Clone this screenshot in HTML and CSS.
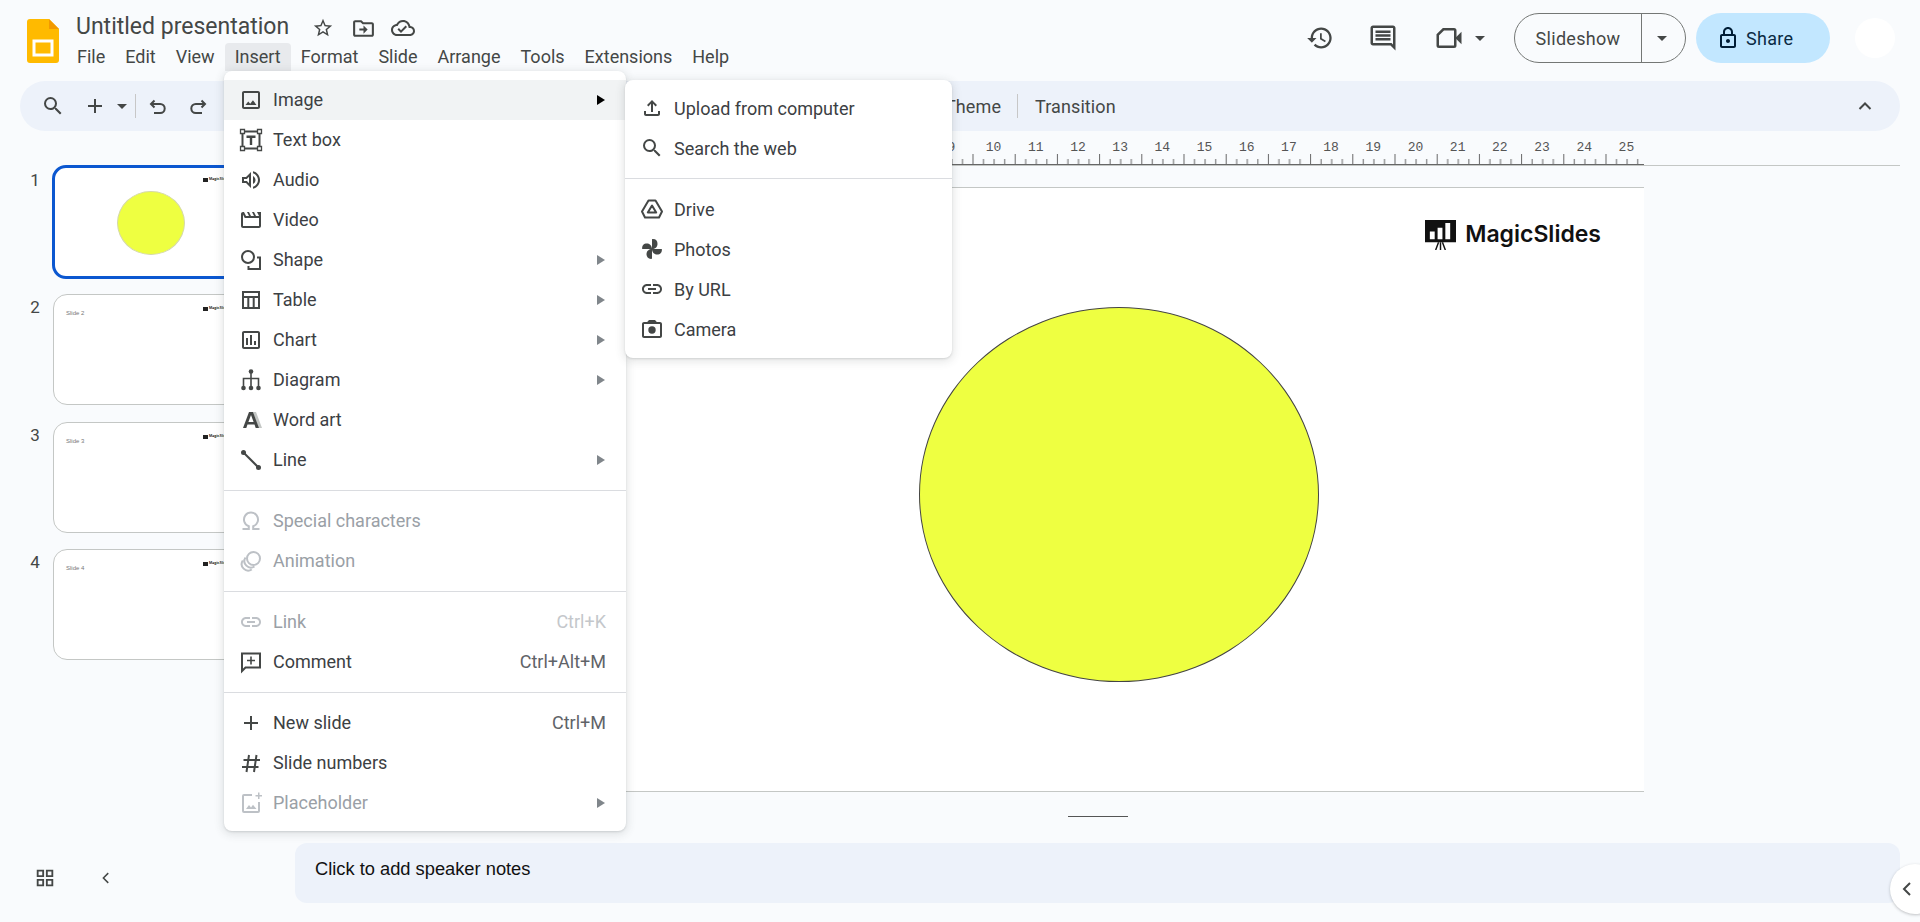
FILE: index.html
```html
<!DOCTYPE html>
<html lang="en">
<head>
<meta charset="utf-8">
<title>Untitled presentation</title>
<link rel="stylesheet" href="styles.css">
</head>
<body>
<div class="app">
  <header class="header">
    <svg class="doc-logo" viewBox="0 0 32 44"><path fill="#ffba00" d="M3 0h19l10 10v31a3 3 0 0 1-3 3H3a3 3 0 0 1-3-3V3a3 3 0 0 1 3-3z"/><path fill="#f29900" d="M22 0l10 10H22z"/><path fill="none" stroke="#fff" stroke-width="3" d="M7 22h18v14H7z"/></svg>
    <div class="doc-col">
      <div class="title-row">
        <span class="doc-title">Untitled presentation</span>
        <svg class="ic-star" viewBox="0 0 24 24"><path d="M22 9.24l-7.19-.62L12 2 9.19 8.63 2 9.24l5.46 4.73L5.82 21 12 17.27 18.18 21l-1.63-7.03L22 9.24zM12 15.4l-3.76 2.27 1-4.28-3.32-2.88 4.38-.38L12 6.1l1.71 4.04 4.38.38-3.32 2.88 1 4.28L12 15.4z"/></svg>
        <svg class="ic-folder" viewBox="0 0 24 24"><path d="M20 6h-8l-2-2H4c-1.1 0-2 .9-2 2v12c0 1.1.9 2 2 2h16c1.1 0 2-.9 2-2V8c0-1.1-.9-2-2-2zm0 12H4V6h5.17l2 2H20v10zm-8-4H8v-2h4V9l4 4-4 4v-3z"/></svg>
        <svg class="ic-cloud" viewBox="0 0 24 24"><path d="M19.35 10.04C18.67 6.59 15.64 4 12 4 9.11 4 6.6 5.64 5.35 8.04 2.34 8.36 0 10.91 0 14c0 3.31 2.69 6 6 6h13c2.76 0 5-2.24 5-5 0-2.64-2.05-4.78-4.65-4.96zM19 18H6c-2.21 0-4-1.79-4-4 0-2.05 1.53-3.76 3.56-3.97l1.07-.11.5-.95C8.08 7.14 9.94 6 12 6c2.62 0 4.88 1.86 5.39 4.43l.3 1.5 1.53.11c1.56.1 2.78 1.41 2.78 2.96 0 1.65-1.35 3-3 3zm-9-3.82l-2.09-2.09L6.5 13.5 10 17l6.01-6.01-1.41-1.41z"/></svg>
      </div>
      <nav class="menubar">
        <span class="mb-item">File</span><span class="mb-item">Edit</span><span class="mb-item">View</span><span class="mb-item mb-open">Insert</span><span class="mb-item">Format</span><span class="mb-item">Slide</span><span class="mb-item">Arrange</span><span class="mb-item">Tools</span><span class="mb-item">Extensions</span><span class="mb-item">Help</span>
      </nav>
    </div>
    <div class="actions">
      <svg class="ic-action ic-history" viewBox="0 0 24 24"><path d="M13 3c-4.97 0-9 4.03-9 9H1l3.89 3.89.07.14L9 12H6c0-3.87 3.13-7 7-7s7 3.13 7 7-3.13 7-7 7c-1.93 0-3.68-.79-4.94-2.06l-1.42 1.42C8.27 19.99 10.51 21 13 21c4.97 0 9-4.03 9-9s-4.03-9-9-9zm-1 5v5l4.28 2.54.72-1.21-3.5-2.08V8H12z"/></svg>
      <svg class="ic-action ic-comment" viewBox="0 0 24 24"><path d="M20 2H4c-1.1 0-2 .9-2 2v12c0 1.1.9 2 2 2h14l4 4V4c0-1.1-.9-2-2-2zm0 15.17L18.83 16H4V4h16v13.17zM6 12h12v2H6zm0-3h12v2H6zm0-3h12v2H6z"/></svg>
      <svg class="ic-action ic-meet" viewBox="0 0 24 24"><path fill="none" stroke="#444746" stroke-width="2" d="M7.5 5H16a1 1 0 0 1 1 1v12a1 1 0 0 1-1 1H4a1 1 0 0 1-1-1V9.5z"/><path d="M17 12l5-5v10z"/></svg>
      <span class="caret caret-meet"></span>
      <div class="slideshow"><span class="ss-main">Slideshow</span><span class="ss-drop"><span class="caret"></span></span></div>
      <div class="share">
        <svg class="ic-lock" viewBox="0 0 24 24"><path d="M18 8h-1V6c0-2.76-2.24-5-5-5S7 3.24 7 6v2H6c-1.1 0-2 .9-2 2v10c0 1.1.9 2 2 2h12c1.1 0 2-.9 2-2V10c0-1.1-.9-2-2-2zM9 6c0-1.66 1.34-3 3-3s3 1.34 3 3v2H9V6zm9 14H6V10h12v10zm-6-3c1.1 0 2-.9 2-2s-.9-2-2-2-2 .9-2 2 .9 2 2 2z"/></svg>
        <span>Share</span>
      </div>
      <div class="avatar"></div>
    </div>
  </header>

  <div class="toolbar">
    <svg class="tb-icon" viewBox="0 0 24 24"><path d="M15.5 14h-.79l-.28-.27A6.471 6.471 0 0 0 16 9.5 6.5 6.5 0 1 0 9.5 16c1.61 0 3.09-.59 4.23-1.57l.27.28v.79l5 4.99L20.49 19l-4.99-5zm-6 0C7.01 14 5 11.99 5 9.5S7.01 5 9.5 5 14 7.01 14 9.5 11.99 14 9.5 14z"/></svg>
    <svg class="tb-icon tb-plus" viewBox="0 0 24 24"><path d="M19 13h-6v6h-2v-6H5v-2h6V5h2v6h6v2z"/></svg>
    <span class="caret tb-caret"></span>
    <span class="tb-sep tb-sep-a"></span>
    <svg class="tb-icon tb-undo" viewBox="0 0 24 24"><path class="stroke-ic" d="M8.5 6.5L5 10l3.5 3.5M5 10h9.2a4.5 4.5 0 0 1 0 9H8"/></svg>
    <svg class="tb-icon tb-redo" viewBox="0 0 24 24"><path class="stroke-ic" d="M15.5 6.5L19 10l-3.5 3.5M19 10H9.800a4.500 4.500 0 0 0 0 9H16"/></svg>
    <span class="tb-text tb-theme">Theme</span>
    <span class="tb-sep tb-sep-b"></span>
    <span class="tb-text">Transition</span>
    <svg class="tb-icon tb-collapse" viewBox="0 0 24 24"><path class="stroke-ic" d="M6.500 15L12 9.500 17.500 15"/></svg>
  </div>

  <div class="workspace">
    <aside class="filmstrip">
      <div class="film-row">
        <span class="film-num">1</span>
        <div class="thumb thumb-active">
          <div class="mini-logo"><i class="mini-mark"></i>MagicSlides</div>
          <div class="mini-circle"></div>
        </div>
      </div>
      <div class="film-row">
        <span class="film-num">2</span>
        <div class="thumb"><div class="mini-logo"><i class="mini-mark"></i>MagicSlides</div><span class="mini-title">Slide 2</span></div>
      </div>
      <div class="film-row film-row-short">
        <span class="film-num">3</span>
        <div class="thumb"><div class="mini-logo"><i class="mini-mark"></i>MagicSlides</div><span class="mini-title">Slide 3</span></div>
      </div>
      <div class="film-row">
        <span class="film-num">4</span>
        <div class="thumb"><div class="mini-logo"><i class="mini-mark"></i>MagicSlides</div><span class="mini-title">Slide 4</span></div>
      </div>
      <div class="film-foot">
        <svg class="foot-grid" viewBox="0 0 24 24"><path class="stroke-ic" d="M4 4h6v6H4zM14 4h6v6h-6zM4 14h6v6H4zM14 14h6v6h-6z"/></svg>
        <svg class="foot-chev" viewBox="0 0 24 24"><path class="stroke-ic" d="M15 5.500L8.500 12l6.500 6.500"/></svg>
      </div>
    </aside>

    <main class="editor">
      <div class="ruler">
        <div class="ruler-labels">
          <span>9</span><span>10</span><span>11</span><span>12</span><span>13</span><span>14</span><span>15</span><span>16</span><span>17</span><span>18</span><span>19</span><span>20</span><span>21</span><span>22</span><span>23</span><span>24</span><span>25</span>
        </div>
        <svg class="ruler-ticks" width="1349" height="10">
          <defs>
            <pattern id="ticks" x="2.300" y="0" width="42.200" height="10" patternUnits="userSpaceOnUse">
              <path d="M.5 0v10M11 5v5M21.600 5v5M32.200 5v5" stroke="#666" stroke-width="1" fill="none"/>
            </pattern>
          </defs>
          <rect width="1349" height="10" fill="url(#ticks)"/>
        </svg>
      </div>
      <div class="slide">
        <div class="slide-logo">
          <svg class="slide-mark" viewBox="0 0 32 31"><path fill="#111" d="M0 0h32v23H0z"/><path fill="#fff" d="M5 12h5v8H5zM13 8h5v12h-5zM21 3h5v17h-5z"/><path stroke="#111" stroke-width="1.500" fill="none" d="M14 23l-3 8M16 23v8M18 23l3 8"/></svg>
          <span>MagicSlides</span>
        </div>
        <div class="slide-circle"></div>
      </div>
      <div class="handle"></div>
      <div class="notes">Click to add speaker notes</div>
    </main>
  </div>

  <div class="side-toggle"><svg viewBox="0 0 24 24"><path class="stroke-ic" d="M15 6l-6 6 6 6"/></svg></div>

  <div class="menu menu-insert">
    <div class="mi mi-hover"><svg class="mi-ic" viewBox="0 0 24 24"><path d="M19 3H5c-1.100 0-2 .9-2 2v14c0 1.100.9 2 2 2h14c1.100 0 2-.9 2-2V5c0-1.100-.9-2-2-2zm0 16H5V5h14v14zm-5.040-6.710l-2.750 3.540-1.960-2.360L6.500 17h11l-3.540-4.710z"/></svg><span>Image</span><i class="arrow arrow-dark"></i></div>
    <div class="mi"><svg class="mi-ic" viewBox="0 0 24 24"><path class="stroke-ic" d="M4 3.500h16M4 20.500h16M3.500 4v16M20.500 4v16"/><path d="M1.500 1.500h4v4h-4zM18.500 1.500h4v4h-4zM1.500 18.500h4v4h-4zM18.500 18.500h4v4h-4z" fill="#fff" stroke="#444746" stroke-width="1.300"/><path d="M7.500 7.500h9v2.400h-3.300V17h-2.400V9.900H7.500z"/></svg><span>Text box</span></div>
    <div class="mi"><svg class="mi-ic" viewBox="0 0 24 24"><path d="M3 9v6h4l5 5V4L7 9H3zm7-.17v6.340L7.830 13H5v-2h2.830L10 8.830zM16.500 12c0-1.770-1.020-3.290-2.500-4.030v8.050c1.480-.73 2.500-2.250 2.500-4.020z"/><path d="M14 3.230v2.060c2.890.86 5 3.540 5 6.710s-2.110 5.850-5 6.710v2.060c4.010-.91 7-4.490 7-8.770 0-4.280-2.990-7.860-7-8.770z"/></svg><span>Audio</span></div>
    <div class="mi"><svg class="mi-ic" viewBox="0 0 24 24"><path d="M4 6.470L5.760 10H20v8H4V6.470M22 4h-4l2 4h-3l-2-4h-2l2 4h-3l-2-4H8l2 4H7L5 4H4c-1.100 0-1.990.9-1.990 2L2 18c0 1.100.9 2 2 2h16c1.100 0 2-.9 2-2V4z"/></svg><span>Video</span></div>
    <div class="mi"><svg class="mi-ic" viewBox="0 0 24 24"><circle class="stroke-ic" cx="9" cy="9" r="6"/><path class="stroke-ic" d="M18 9.500h3v11.500H9.500v-3"/></svg><span>Shape</span><i class="arrow"></i></div>
    <div class="mi"><svg class="mi-ic" viewBox="0 0 24 24"><path class="stroke-ic" d="M4 4h16v16H4zM4 9h16M9.300 9v11M14.700 9v11"/></svg><span>Table</span><i class="arrow"></i></div>
    <div class="mi"><svg class="mi-ic" viewBox="0 0 24 24"><path d="M19 3H5c-1.100 0-2 .9-2 2v14c0 1.100.9 2 2 2h14c1.100 0 2-.9 2-2V5c0-1.100-.9-2-2-2zm0 16H5V5h14v14zM7 10h2v7H7zm4-3h2v10h-2zm4 6h2v4h-2z"/></svg><span>Chart</span><i class="arrow"></i></div>
    <div class="mi"><svg class="mi-ic" viewBox="0 0 24 24"><circle cx="12" cy="3.500" r="2.300"/><circle cx="4.500" cy="20" r="2.300"/><circle cx="12" cy="20" r="2.300"/><circle cx="19.500" cy="20" r="2.300"/><path fill="none" stroke="#444746" stroke-width="1.600" d="M12 5v13M4.500 18v-7.500h15V18"/></svg><span>Diagram</span><i class="arrow"></i></div>
    <div class="mi"><svg class="mi-ic" viewBox="0 0 24 24"><path fill="#c4c7c5" d="M14 4h3l6 16h-3.500z"/><path d="M10 4h4l6 16h-3.300l-1.200-3.500H8.500L7.300 20H4zm-.6 10h5.200L12 7z"/></svg><span>Word art</span></div>
    <div class="mi"><svg class="mi-ic" viewBox="0 0 24 24"><circle cx="4.500" cy="4.500" r="2.500"/><circle cx="19.500" cy="19.500" r="2.500"/><path fill="none" stroke="#444746" stroke-width="2" d="M4.500 4.500l15 15"/></svg><span>Line</span><i class="arrow"></i></div>
    <div class="mi-sep"></div>
    <div class="mi mi-off"><svg class="mi-ic" viewBox="0 0 24 24"><path fill="none" stroke="#bdc1c6" stroke-width="2" d="M3.500 20h6.300v-2.800a7 7 0 1 1 4.400 0V20h6.300"/></svg><span>Special characters</span></div>
    <div class="mi mi-off"><svg class="mi-ic" viewBox="0 0 24 24"><g fill="none" stroke="#bdc1c6" stroke-width="2"><circle cx="14.500" cy="9.500" r="6.500"/><path d="M6.500 8.500a6.500 6.500 0 0 0 9 9"/><path d="M3.800 11.500a6.500 6.500 0 0 0 9 9"/></g></svg><span>Animation</span></div>
    <div class="mi-sep"></div>
    <div class="mi mi-off mi-faint"><svg class="mi-ic" viewBox="0 0 24 24"><path d="M3.900 12c0-1.710 1.390-3.100 3.100-3.100h4V7H7c-2.760 0-5 2.240-5 5s2.240 5 5 5h4v-1.900H7c-1.710 0-3.100-1.390-3.100-3.100zM8 13h8v-2H8v2zm9-6h-4v1.900h4c1.710 0 3.100 1.390 3.100 3.100s-1.390 3.100-3.100 3.100h-4V17h4c2.760 0 5-2.240 5-5s-2.240-5-5-5z"/></svg><span>Link</span><em class="kbd">Ctrl+K</em></div>
    <div class="mi"><svg class="mi-ic" viewBox="0 0 24 24"><path class="stroke-ic" d="M3 21V3.500h18v14H6.500z"/><path class="stroke-thin" d="M12 6.500v8M8 10.500h8"/></svg><span>Comment</span><em class="kbd">Ctrl+Alt+M</em></div>
    <div class="mi-sep"></div>
    <div class="mi"><svg class="mi-ic" viewBox="0 0 24 24"><path d="M19 13h-6v6h-2v-6H5v-2h6V5h2v6h6v2z"/></svg><span>New slide</span><em class="kbd">Ctrl+M</em></div>
    <div class="mi"><svg class="mi-ic" viewBox="0 0 24 24"><path class="stroke-ic" d="M10 4L7.500 21M17.500 4L15 21M4.500 9H21M3 16h16.500"/></svg><span>Slide numbers</span></div>
    <div class="mi mi-off"><svg class="mi-ic" viewBox="0 0 24 24"><path fill="none" stroke="#bdc1c6" stroke-width="2" d="M13 4H5a1 1 0 0 0-1 1v15a1 1 0 0 0 1 1h14a1 1 0 0 0 1-1v-9"/><path fill="#bdc1c6" d="M7 18l3-4 2 2.500 2-2.700 3.500 4.200zM19 1.500h1.500V4H23v1.500h-2.500V8H19V5.500h-2.500V4H19z"/></svg><span>Placeholder</span><i class="arrow"></i></div>
  </div>

  <div class="menu menu-image">
    <div class="mi"><svg class="mi-ic" viewBox="0 0 24 24"><path d="M18 15v3H6v-3H4v3c0 1.100.9 2 2 2h12c1.100 0 2-.9 2-2v-3h-2zM7 9l1.410 1.410L11 7.830V16h2V7.830l2.590 2.580L17 9l-5-5-5 5z"/></svg><span>Upload from computer</span></div>
    <div class="mi"><svg class="mi-ic" viewBox="0 0 24 24"><path d="M15.500 14h-.79l-.28-.27A6.471 6.471 0 0 0 16 9.500 6.500 6.500 0 1 0 9.500 16c1.610 0 3.090-.59 4.230-1.570l.27.28v.79l5 4.990L20.490 19l-4.990-5zm-6 0C7.010 14 5 11.990 5 9.500S7.010 5 9.500 5 14 7.010 14 9.500 11.990 14 9.500 14z"/></svg><span>Search the web</span></div>
    <div class="mi-sep"></div>
    <div class="mi"><svg class="mi-ic" viewBox="0 0 24 24"><path fill="none" stroke="#444746" stroke-width="2" stroke-linejoin="round" d="M8.500 3.500h7L22 14.500l-3 6H5l-3-6z"/><path fill="none" stroke="#444746" stroke-width="2" stroke-linejoin="round" d="M12 8.500L7.800 15.500h8.400z"/></svg><span>Drive</span></div>
    <div class="mi"><svg class="mi-ic" viewBox="0 0 24 24"><path d="M12 12V2.200c3.500-.5 5.500 1.500 5.500 4.800 0 3-2.500 5-5.500 5z"/><path d="M12 12V2.200c3.500-.5 5.500 1.500 5.500 4.800 0 3-2.500 5-5.500 5z" transform="rotate(90 12 12)"/><path d="M12 12V2.200c3.500-.5 5.500 1.500 5.500 4.800 0 3-2.500 5-5.500 5z" transform="rotate(180 12 12)"/><path d="M12 12V2.200c3.500-.5 5.500 1.500 5.500 4.800 0 3-2.500 5-5.500 5z" transform="rotate(270 12 12)"/></svg><span>Photos</span></div>
    <div class="mi"><svg class="mi-ic" viewBox="0 0 24 24"><path d="M3.900 12c0-1.710 1.390-3.100 3.100-3.100h4V7H7c-2.760 0-5 2.240-5 5s2.240 5 5 5h4v-1.900H7c-1.710 0-3.100-1.390-3.100-3.100zM8 13h8v-2H8v2zm9-6h-4v1.900h4c1.710 0 3.100 1.390 3.100 3.100s-1.390 3.100-3.100 3.100h-4V17h4c2.760 0 5-2.240 5-5s-2.240-5-5-5z"/></svg><span>By URL</span></div>
    <div class="mi"><svg class="mi-ic" viewBox="0 0 24 24"><path d="M20 5h-3.200L15 3H9L7.200 5H4c-1.100 0-2 .9-2 2v12c0 1.100.9 2 2 2h16c1.100 0 2-.9 2-2V7c0-1.100-.9-2-2-2zm0 14H4V7h16v12z"/><circle cx="12" cy="13" r="3.700"/></svg><span>Camera</span></div>
  </div>
</div>
</body>
</html>
```
FILE: styles.css
```css
* { box-sizing: border-box; }
html, body { margin: 0; padding: 0; }
body { background: #f9fbfd; font-family: Roboto, "Liberation Sans", sans-serif; color: #444746; }
svg { display: block; flex: none; fill: #444746; }
.stroke-ic { fill: none; stroke: #444746; stroke-width: 2; }
.stroke-thin { fill: none; stroke: #444746; stroke-width: 1.600; }

.app { position: relative; width: 1920px; height: 922px; overflow: hidden; display: flex; flex-direction: column; background: #f9fbfd; }

/* header */
.header { flex: none; height: 81px; display: flex; align-items: flex-start; padding-left: 27px; }
.doc-logo { width: 32px; height: 44px; margin-top: 19px; }
.doc-col { margin-left: 17px; display: flex; flex-direction: column; }
.title-row { height: 43px; padding-top: 10px; display: flex; align-items: flex-start; }
.doc-title { font-size: 23px; line-height: 34px; width: 236px; color: #444746; white-space: nowrap; }
.ic-star { width: 22px; height: 22px; margin-top: 7px; }
.ic-folder { width: 25px; height: 25px; margin: 6px 0 0 17px; }
.ic-cloud { width: 24px; height: 24px; margin: 6px 0 0 15px; }
.menubar { display: flex; margin-left: -9px; height: 28px; }
.mb-item { font-size: 18px; line-height: 28px; padding: 0 10px; color: #444746; }
.mb-open { background: #e8eaed; border-radius: 4px 4px 0 0; }

.actions { margin-left: auto; display: flex; align-items: center; height: 76px; padding-right: 25px; }
.ic-action { width: 28px; height: 28px; }
.ic-comment { margin-left: 34px; width: 30px; height: 30px; }
.ic-meet { margin-left: 36px; width: 30px; height: 30px; }
.caret { display: inline-block; width: 0; height: 0; border-left: 5px solid transparent; border-right: 5px solid transparent; border-top: 5px solid #444746; }
.caret-meet { margin-left: 11px; margin-right: 29px; }
.slideshow { width: 172px; height: 50px; border: 1px solid #747775; border-radius: 25px; display: flex; }
.ss-main { width: 127px; display: flex; align-items: center; justify-content: center; font-size: 18px; letter-spacing: .3px; border-right: 1px solid #747775; }
.ss-drop { flex: 1; display: flex; align-items: center; justify-content: center; padding-right: 4px; }
.share { margin-left: 10px; width: 134px; height: 50px; border-radius: 25px; background: #c2e7ff; display: flex; align-items: center; padding-left: 20px; gap: 6px; font-size: 18px; letter-spacing: .3px; color: #0a2a43; }
.ic-lock { width: 24px; height: 24px; fill: #001d35; }
.avatar { margin-left: 25px; width: 40px; height: 40px; border-radius: 50%; background: #fff; }

/* toolbar */
.toolbar { flex: none; height: 50px; margin: 0 20px; background: #edf2fa; border-radius: 25px; display: flex; align-items: center; padding: 0 23px 0 21px; }
.tb-icon { width: 24px; height: 24px; }
.tb-plus { margin-left: 18px; }
.tb-caret { margin-left: 10px; }
.tb-sep { width: 1px; height: 24px; background: #c7c7c7; }
.tb-sep-a { margin-left: 8px; }
.tb-undo { margin-left: 10px; }
.tb-redo { margin-left: 16px; }
.tb-text { font-size: 18px; color: #444746; letter-spacing: .1px; }
.tb-theme { margin-left: 735px; }
.tb-sep-b { margin: 0 17px 0 16px; }
.tb-collapse { margin-left: auto; }

/* workspace */
.workspace { flex: 1; display: flex; min-height: 0; }
.filmstrip { flex: none; width: 295px; display: flex; flex-direction: column; padding-top: 34px; padding-bottom: 33px; }
.film-row { display: flex; height: 128px; flex: none; }
.film-row-short { height: 127px; }
.film-num { width: 52px; padding-left: 18px; text-align: center; font-size: 17px; line-height: 20px; margin-top: 5px; color: #444746; }
.film-row + .film-row .film-num { margin-top: 4px; }
.thumb { position: relative; width: 197px; height: 111px; margin: 1px 0 0 1px; background: #fff; border: 1px solid #c4c7c5; border-radius: 14px; overflow: hidden; }
.thumb-active { width: 199px; height: 114px; margin: 0; border: 3px solid #0b57d0; }
.mini-logo { position: absolute; top: 11px; left: 149px; display: flex; align-items: center; gap: 1px; font-family: Inter, sans-serif; font-weight: 600; font-size: 3.500px; line-height: 5px; color: #222; white-space: nowrap; }
.mini-mark { display: block; width: 5px; height: 4px; background: #222; }
.thumb-active .mini-logo { left: 148px; top: 9px; }
.mini-circle { position: absolute; left: 62px; top: 23px; width: 68px; height: 64px; border-radius: 50%; background: #eeff41; border: 1px solid #d5d9a8; }
.mini-title { position: absolute; left: 12px; top: 14px; font-family: "Liberation Sans", sans-serif; font-size: 6px; line-height: 8px; color: #777; }
.film-foot { margin-top: auto; display: flex; align-items: center; padding-left: 34px; }
.foot-grid { width: 22px; height: 22px; }
.foot-chev { width: 18px; height: 18px; margin-left: 41px; }

/* editor */
.editor { flex: 1; min-width: 0; padding-right: 20px; display: flex; flex-direction: column; }
.ruler { flex: none; height: 35px; border-bottom: 1px solid #c4c7c5; }
.ruler-labels { height: 24px; margin-bottom: -1px; padding-left: 635.300px; display: flex; align-items: flex-end; font-family: "Liberation Mono", monospace; font-size: 13px; line-height: 14px; color: #555; }
.ruler-labels span { flex: none; width: 42.200px; text-align: center; }
.ruler-ticks { border-bottom: 1px solid #666; box-sizing: content-box; }
.slide { position: relative; flex: none; width: 1074px; height: 605px; margin: 21px 0 0 275px; background: #fff; border-top: 1px solid #c4c7c5; border-bottom: 1px solid #c4c7c5; }
.slide-logo { position: absolute; top: 32px; right: 43px; display: flex; align-items: flex-start; gap: 9px; font-family: Inter, sans-serif; font-weight: 600; font-size: 23px; line-height: 28px; color: #111; }
.slide-mark { width: 31px; height: 30px; }
.slide-circle { position: absolute; left: 349px; top: 119px; width: 400px; height: 375px; border-radius: 50%; background: #eeff41; border: 1px solid #444; }
.handle { flex: none; width: 60px; height: 1px; background: #555; margin: 24px 0 0 773px; }
.notes { flex: none; height: 60px; margin-top: 26px; padding: 16px 20px; border-radius: 12px; background: #edf2fa; font-family: "Liberation Sans", sans-serif; font-size: 18.300px; line-height: 20px; color: #111; }

.side-toggle { position: absolute; left: 1890px; top: 864px; width: 50px; height: 50px; border-radius: 50%; background: #fff; box-shadow: 0 1px 3px rgba(60,64,67,.3); padding: 13px 0 0 5px; }
.side-toggle svg { width: 24px; height: 24px; }

/* menus */
.menu { position: absolute; background: #fff; border-radius: 8px; box-shadow: 0 1px 2px rgba(60,64,67,.15), 0 2px 8px 2px rgba(60,64,67,.12); }
.menu-insert { left: 224px; top: 71px; width: 402px; padding: 9px 0 8px; }
.menu-image { left: 625px; top: 80px; width: 327px; padding: 8px 0 9px; }
.mi { height: 40px; display: flex; align-items: center; padding: 0 20px 0 15px; font-size: 18px; color: #3c4043; }
.menu-insert .mi > span { margin-top: -1px; }
.mi-ic { width: 24px; height: 24px; margin-right: 10px; }
.mi-hover { background: #f1f3f4; }
.mi-off { color: #9aa0a6; }
.mi-off .mi-ic { fill: #bdc1c6; }
.mi-faint .kbd { color: #c4c7cb; }
.mi-sep { height: 21px; padding-top: 10px; }
.mi-sep::before { content: ""; display: block; height: 1px; background: #dadce0; }
.kbd { margin-left: auto; margin-top: -1px; font-style: normal; color: #5f6368; }
.arrow { margin-left: auto; margin-right: 1px; width: 0; height: 0; border-top: 5px solid transparent; border-bottom: 5px solid transparent; border-left: 8px solid #80868b; }
.arrow-dark { border-left-color: #000; }
```
